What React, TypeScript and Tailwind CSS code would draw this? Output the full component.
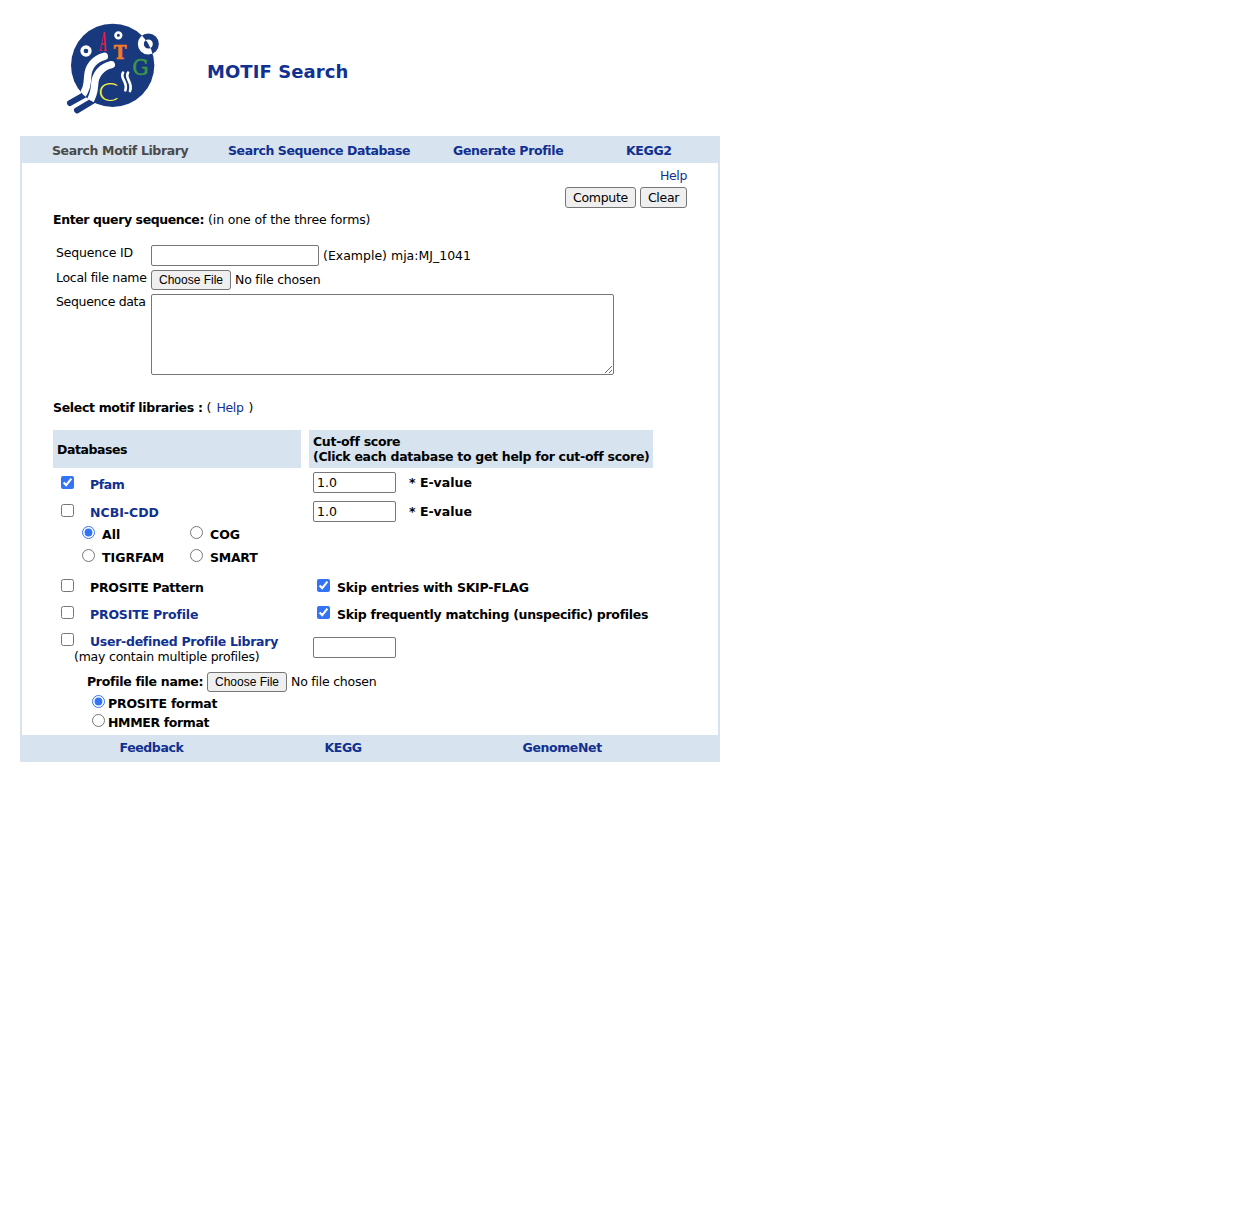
import type { ReactNode } from "react";

function Choice({ type = "checkbox", name, checked, gap, children }: {
  type?: "checkbox" | "radio"; name?: string; checked?: boolean; gap: string; children: ReactNode;
}) {
  return (
    <label className={`flex items-start ${gap}`}>
      <input type={type} name={name} defaultChecked={checked} className="m-0 size-[13px] shrink-0 accent-[#3374f6]" />
      <span className="mt-px font-bold">{children}</span>
    </label>
  );
}

function Link({ children, className = "" }: { children: ReactNode; className?: string }) {
  return <a href="#" className={`text-[#11308f] ${className}`}>{children}</a>;
}

const field = "block rounded-[2px] border border-[#767676] bg-white px-[3px] outline-none";
const button = "rounded-[3px] border border-[#767676] bg-[#efefef] text-center";

function FilePicker() {
  return (
    <div className="flex items-start">
      <button className={`${button} h-[20px] w-[80px] font-['Liberation_Sans'] text-[12px] leading-[18px]`}>Choose File</button>
      <span className="ml-1 mt-[2px] tracking-[-0.22px]">No file chosen</span>
    </div>
  );
}

function Logo() {
  return (
    <svg width="110" height="105" viewBox="0 0 330 315" className="block">
      <defs>
        <clipPath id="disc"><circle cx="158" cy="151" r="125" /></clipPath>
      </defs>
      <circle cx="265" cy="87" r="22.5" fill="none" stroke="#18397d" strokeWidth="18" />
      <g fill="none" stroke="#18397d" strokeWidth="18" strokeLinecap="round">
        <path d="M76 238 L30 264" />
        <path d="M98 258 L51 286" />
      </g>
      <circle cx="158" cy="151" r="125" fill="#18397d" />
      <circle cx="78" cy="108" r="12" fill="none" stroke="#fff" strokeWidth="10" />
      <circle cx="175" cy="61" r="8.5" fill="none" stroke="#fff" strokeWidth="8" />
      <g clipPath="url(#disc)" fill="none" stroke="#fff" strokeLinecap="round">
        <circle cx="265" cy="87" r="22.5" strokeWidth="18" />
        <path d="M133 124 C104 131 84 155 83 185 C82 210 79 226 62 248" strokeWidth="22" />
        <path d="M154 149 C126 155 105 178 104 208 C103 232 99 248 82 272" strokeWidth="22" />
      </g>
      <path d="M189 173 C178 190 205 200 196 226 M204 173 C193 190 220 202 210 228" fill="none" stroke="#fff" strokeWidth="8" strokeLinecap="round" />
      <text transform="translate(119 108) scale(.36 1)" fontFamily="Liberation Serif" fontWeight="700" fontStyle="italic" fontSize="90" fill="#e0214b">A</text>
      <text x="161" y="131" fontFamily="DejaVu Serif" fontWeight="700" fontSize="53" textLength="38" lengthAdjust="spacingAndGlyphs" fill="#f47a28" stroke="#f47a28" strokeWidth="2">T</text>
      <text x="217" y="179" fontFamily="DejaVu Serif" fontSize="64" textLength="49" lengthAdjust="spacingAndGlyphs" fill="#3c9848" stroke="#3c9848" strokeWidth="1.5">G</text>
      <text x="114" y="257" fontFamily="Lato" fontWeight="300" fontSize="75" textLength="62" lengthAdjust="spacingAndGlyphs" fill="#f6ee42">C</text>
    </svg>
  );
}

export default function App() {
  return (
    <div className="min-h-[1225px] bg-white pl-5 font-['DejaVu_Sans',sans-serif] text-[12.5px] leading-[15px] whitespace-nowrap text-black">
      <header className="flex h-[136px] pl-10 pt-[15px]">
        <Logo />
        <h1 className="ml-[37px] mt-[45px] text-[18px] leading-[24px] font-bold tracking-[0.08px] text-[#11308f]">MOTIF Search</h1>
      </header>
      <div className="w-[700px]">
        <nav className="flex h-[27px] bg-[#d7e3ee] pt-[7px] pl-8 font-bold">
          <span className="w-[176px] tracking-[-0.38px] text-[#4a4a4a]">Search Motif Library</span>
          <Link className="w-[225px] tracking-[-0.42px]">Search Sequence Database</Link>
          <Link className="w-[173px] tracking-[-0.35px]">Generate Profile</Link>
          <Link className="tracking-[-0.35px]">KEGG2</Link>
        </nav>
        <main className="h-[572px] border-x-2 border-[#d7e3ee] pl-[31px]">
          <section className="h-[267px]">
            <div className="mr-[31px] flex h-[24px] justify-end pt-[5px]"><Link className="tracking-[-0.35px]">Help</Link></div>
            <div className="mr-[31px] flex h-[25px] justify-end gap-1">
              <button className={`${button} h-[21px] w-[71px] tracking-[-0.3px]`}>Compute</button>
              <button className={`${button} h-[21px] w-[47px] tracking-[-0.3px]`}>Clear</button>
            </div>
            <p className="h-[33px]"><b className="tracking-[-0.4px]">Enter query sequence:</b> <span className="tracking-[-0.12px]">(in one of the three forms)</span></p>
            <div className="flex h-[25px] pl-[3px]">
              <label className="w-[95px] tracking-[-0.18px]">Sequence ID</label>
              <input className={`${field} h-[21px] w-[168px]`} />
              <span className="ml-1 mt-[3px]">(Example) mja:MJ_1041</span>
            </div>
            <div className="flex h-[24px] pl-[3px]">
              <label className="w-[95px] tracking-[-0.28px]">Local file name</label>
              <FilePicker />
            </div>
            <div className="flex h-[106px] pl-[3px]">
              <label className="w-[95px] tracking-[-0.33px]">Sequence data</label>
              <textarea className={`${field} h-[81px] w-[463px] resize`} />
            </div>
            <p><b className="tracking-[-0.33px]">Select motif libraries :</b> (<Link className="mx-[5px] tracking-[-0.35px]">Help</Link>)</p>
          </section>
          <section className="grid w-[600px] grid-cols-[248px_344px] gap-x-2">
            <div className="h-[38px] bg-[#d7e3ee] pl-1 pt-3 font-bold tracking-[-0.43px]">Databases</div>
            <div className="h-[38px] bg-[#d7e3ee] pl-1 pt-1 font-bold tracking-[-0.3px]">Cut-off score<br />(Click each database to get help for cut-off score)</div>
            <div className="h-[33px] pl-2 pt-2"><Choice gap="gap-4" checked><Link className="tracking-[-0.45px]">Pfam</Link></Choice></div>
            <div className="flex pl-1 pt-1">
              <input defaultValue="1.0" className={`${field} h-[21px] w-[83px]`} />
              <b className="ml-[13px] mt-[3px]">* E-value</b>
            </div>
            <div className="h-[78px] pl-2 pt-[3px]">
              <Choice gap="gap-4"><Link>NCBI-CDD</Link></Choice>
              <div className="ml-[21px] mt-[6px] grid grid-cols-[108px_100px] auto-rows-[23px]">
                <Choice type="radio" name="cdd" gap="gap-[7px]" checked>All</Choice>
                <Choice type="radio" name="cdd" gap="gap-[7px]">COG</Choice>
                <Choice type="radio" name="cdd" gap="gap-[7px]">TIGRFAM</Choice>
                <Choice type="radio" name="cdd" gap="gap-[7px]"><span className="tracking-[-0.25px]">SMART</span></Choice>
              </div>
            </div>
            <div className="flex pl-1">
              <input defaultValue="1.0" className={`${field} h-[21px] w-[83px]`} />
              <b className="ml-[13px] mt-[3px]">* E-value</b>
            </div>
            <div className="h-[27px] pl-2"><Choice gap="gap-4"><span className="tracking-[-0.24px]">PROSITE Pattern</span></Choice></div>
            <div className="pl-2"><Choice gap="gap-[7px]" checked><span className="tracking-[-0.23px]">Skip entries with SKIP-FLAG</span></Choice></div>
            <div className="h-[27px] pl-2"><Choice gap="gap-4"><Link className="tracking-[-0.18px]">PROSITE Profile</Link></Choice></div>
            <div className="pl-2"><Choice gap="gap-[7px]" checked><span className="tracking-[-0.28px]">Skip frequently matching (unspecific) profiles</span></Choice></div>
            <div className="h-[39px] pl-2">
              <Choice gap="gap-4"><Link className="tracking-[-0.29px]">User-defined Profile Library</Link></Choice>
              <p className="pl-[13px] tracking-[-0.22px]">(may contain multiple profiles)</p>
            </div>
            <div className="pl-1 pt-1"><input className={`${field} h-[21px] w-[83px]`} /></div>
          </section>
          <div className="flex h-[23px] pl-[34px]">
            <b className="mt-[2px] w-[120px] tracking-[-0.29px]">Profile file name:</b>
            <FilePicker />
          </div>
          <div className="flex flex-col gap-[3px] pl-[39px]">
            <Choice type="radio" name="format" gap="gap-[3px]" checked><span className="tracking-[-0.2px]">PROSITE format</span></Choice>
            <Choice type="radio" name="format" gap="gap-[3px]"><span className="tracking-[-0.36px]">HMMER format</span></Choice>
          </div>
        </main>
        <footer className="flex h-[27px] bg-[#d7e3ee] pt-[5px] pl-[99.5px] font-bold">
          <Link className="w-[205px] tracking-[-0.4px]">Feedback</Link>
          <Link className="w-[198px] tracking-[-0.4px]">KEGG</Link>
          <Link className="tracking-[-0.38px]">GenomeNet</Link>
        </footer>
      </div>
    </div>
  );
}
